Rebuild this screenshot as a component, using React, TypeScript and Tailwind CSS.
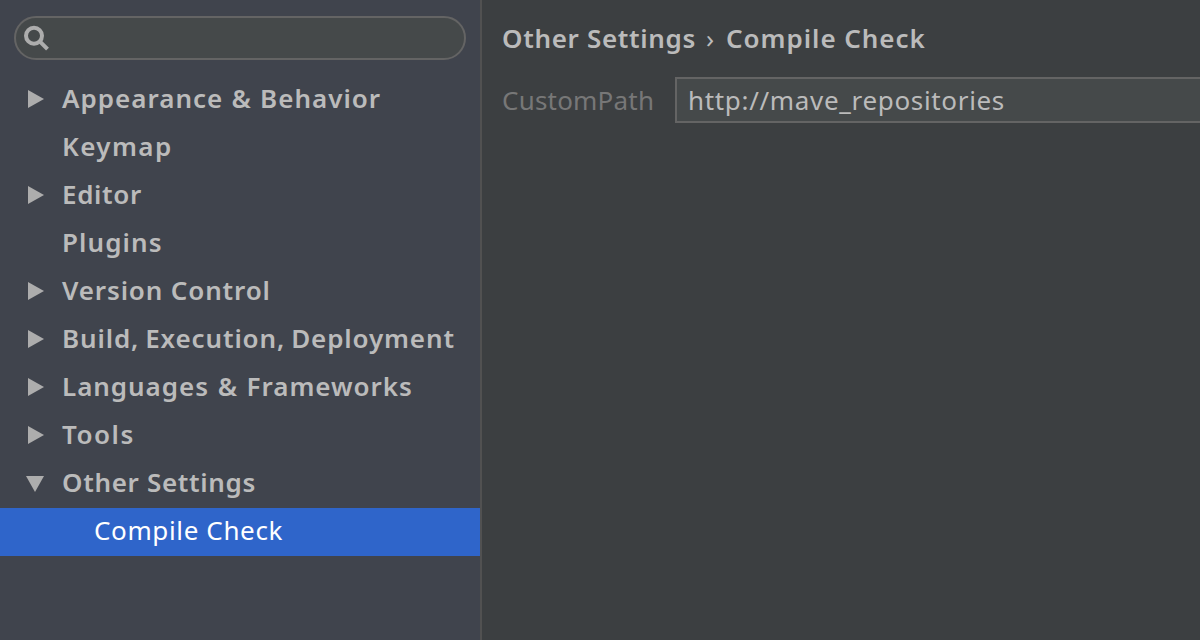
type Item = {
  label: string;
  tracking: string;
  state?: "collapsed" | "expanded";
};

const items: Item[] = [
  { label: "Appearance & Behavior", tracking: "tracking-[1px] [word-spacing:0.5px]", state: "collapsed" },
  { label: "Keymap", tracking: "tracking-[1.4px]" },
  { label: "Editor", tracking: "tracking-[0.65px]", state: "collapsed" },
  { label: "Plugins", tracking: "tracking-[1.1px]" },
  { label: "Version Control", tracking: "tracking-[0.86px]", state: "collapsed" },
  { label: "Build, Execution, Deployment", tracking: "tracking-[0.87px] [word-spacing:-1.6px]", state: "collapsed" },
  { label: "Languages & Frameworks", tracking: "tracking-[0.95px] [word-spacing:1px]", state: "collapsed" },
  { label: "Tools", tracking: "tracking-[1.5px]", state: "collapsed" },
  { label: "Other Settings", tracking: "tracking-[0.68px]", state: "expanded" },
];

function Arrow({ state }: { state: "collapsed" | "expanded" }) {
  return (
    <svg width="20" height="20" viewBox="0 0 20 20" className="fill-[#adadad]">
      {state === "collapsed" ? <path d="M3 1v18l16-9z" /> : <path d="M1 3h18l-9 16z" />}
    </svg>
  );
}

function TreeItem({ label, tracking, state }: Item) {
  return (
    <li className="flex h-12 items-center pl-[25px]">
      <span className="flex w-[37px] shrink-0 pb-0.5">{state && <Arrow state={state} />}</span>
      <span className={`pb-1 font-semibold ${tracking}`}>{label}</span>
    </li>
  );
}

export default function App() {
  return (
    <div className="flex h-[640px] w-[1200px] overflow-hidden bg-[#3c3f41] font-['Noto_Sans',sans-serif] text-[26px] leading-9 whitespace-nowrap text-[#bbbbbb]">
      <aside className="flex w-[482px] shrink-0 flex-col border-r-2 border-[#515151] bg-[#40444d] pt-4">
        <div className="mr-3.5 ml-3.5 flex h-11 items-center rounded-[22px] border-2 border-[#646464] bg-[#45494a] pl-2">
          <svg width="26" height="26" viewBox="0 0 26 26" fill="none" stroke="#adadad" strokeWidth="4">
            <circle cx="10" cy="10.7" r="8" />
            <path d="M15.5 16.2l8 8" />
          </svg>
        </div>
        <ul className="mt-4 flex flex-col">
          {items.map((item) => (
            <TreeItem key={item.label} {...item} />
          ))}
          <li className="flex h-12 items-center bg-[#2f65ca] pl-[94px] text-white">
            <span className="pb-1 tracking-[0.63px]">Compile Check</span>
          </li>
        </ul>
      </aside>
      <main className="flex min-w-0 grow flex-col pt-5 pl-5">
        <h1 className="flex font-semibold">
          <span className="tracking-[0.68px]">Other Settings</span>
          <span className="w-[30px] pl-[10px] font-normal">›</span>
          <span className="tracking-[0.96px]">Compile Check</span>
        </h1>
        <div className="mt-[21px] flex items-center">
          <span className="w-[173px] shrink-0 tracking-[0.2px] text-[#777777]">CustomPath</span>
          <div className="flex h-[46px] grow items-center border-2 border-r-0 border-[#646464] bg-[#45494a] pl-[11px] tracking-[0.67px]">
            http://mave_repositories
          </div>
        </div>
      </main>
    </div>
  );
}
